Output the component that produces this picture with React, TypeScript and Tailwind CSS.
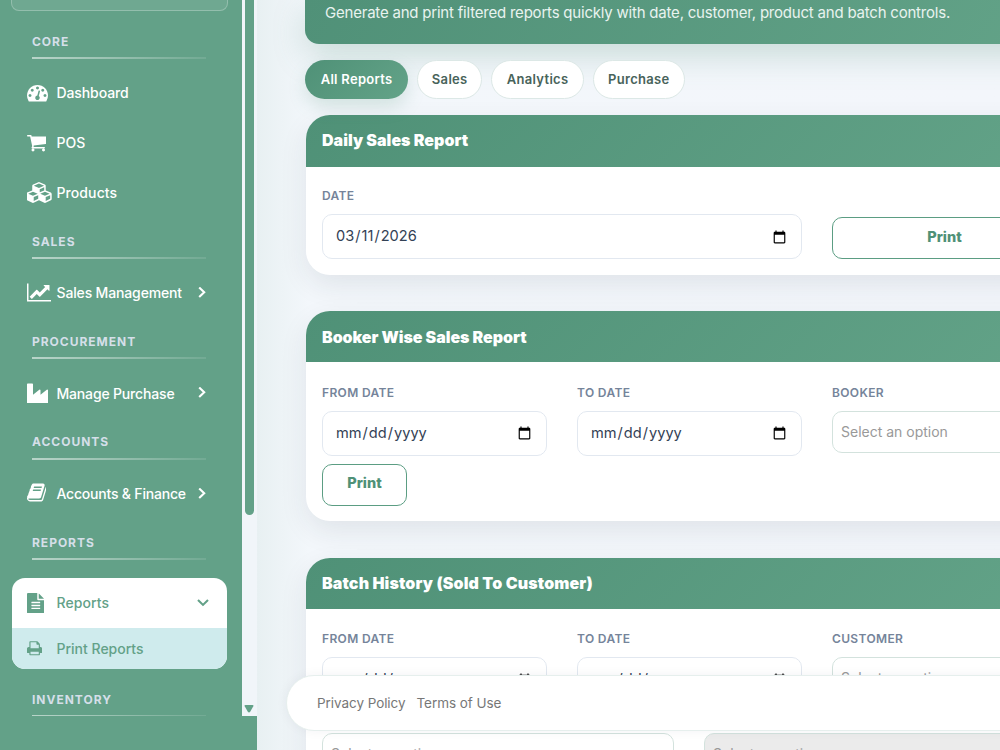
import type { ReactNode } from "react";

type IconProps = { box: string; d: string; className: string; flip?: boolean };

function Icon({ box, d, className, flip }: IconProps) {
  return (
    <svg viewBox={box} className={className} fill="currentColor" aria-hidden="true">
      <path d={d} transform={flip ? "translate(0 1536) scale(1 -1)" : undefined} />
    </svg>
  );
}

const paths = {
  dashboard:
    "M384 1152q0-53-37.5-90.5t-90.5-37.5-90.5 37.5-37.5 90.5 37.5 90.5 90.5 37.5 90.5-37.5 37.5-90.5zm192-448q0-53-37.5-90.5t-90.5-37.5-90.5 37.5-37.5 90.5 37.5 90.5 90.5 37.5 90.5-37.5 37.5-90.5zm428 481l101-382q6-26-7.5-48.5t-38.5-29.5-48 6.5-30 39.5l-101 382q-60 5-107 43.5t-63 98.5q-20 77 20 146t117 89 146-20 89-117q16-60-6-117t-72-91zm660-33q0-53-37.5-90.5t-90.5-37.5-90.5 37.5-37.5 90.5 37.5 90.5 90.5 37.5 90.5-37.5 37.5-90.5zm-640-640q0-53-37.5-90.5t-90.5-37.5-90.5 37.5-37.5 90.5 37.5 90.5 90.5 37.5 90.5-37.5 37.5-90.5zm448 192q0-53-37.5-90.5t-90.5-37.5-90.5 37.5-37.5 90.5 37.5 90.5 90.5 37.5 90.5-37.5 37.5-90.5zm320 448q0 261-141 483-19 29-54 29h-1402q-35 0-54-29-141-221-141-483 0-182 71-348t191-286 286-191 348-71 348 71 286 191 191 286 71 348z",
  cart: "M704 1536q0 52-38 90t-90 38-90-38-38-90 38-90 90-38 90 38 38 90zm896 0q0 52-38 90t-90 38-90-38-38-90 38-90 90-38 90 38 38 90zm128-1088v512q0 24-16.5 42.5t-40.5 21.5l-1044 122q13 60 13 70 0 16-24 64h920q26 0 45 19t19 45-19 45-45 19h-1024q-26 0-45-19t-19-45q0-11 8-31.5t16-36 21.5-40 15.5-29.5l-177-823h-204q-26 0-45-19t-19-45 19-45 45-19h256q16 0 28.5 6.5t19.5 15.5 13 24.5 8 26 5.5 29.5 4.5 26h1201q26 0 45 19t19 45z",
  cubes:
    "M640 1632l384-192v-314l-384 164v342zm-64-454l404-173-404-173-404 173zm1088 454l384-192v-314l-384 164v342zm-64-454l404-173-404-173-404 173zm-448-293l384-165v-266l-384 164v267zm-64-379l441-189-441-189-441 189zm1088 518v416q0 36-19 67t-52 47l-448 224q-25 14-57 14t-57-14l-448-224q-4-2-7-4-2 2-7 4l-448 224q-25 14-57 14t-57-14l-448-224q-33-16-52-47t-19-67v-416q0-38 21.5-70t56.5-48l434-186v-400q0-38 21.5-70t56.5-48l448-192q23-10 50-10t50 10l448 192q35 16 56.5 48t21.5 70v400l434 186q36 16 57 48t21 70z",
  chart:
    "M2048 1536v128h-2048v-1536h128v1408h1920zm-128-1248v435q0 21-19.5 29.5t-35.5-7.5l-121-121-633 633q-10 10-23 10t-23-10l-233-233-416 416-192-192 585-585q10-10 23-10t23 10l233 233 464-464-121-121q-16-16-7.5-35.5t29.5-19.5h435q14 0 23 9t9 23z",
  industry:
    "M448 1536q26 0 45 -19t19 -45v-891l536 429q17 14 40 14q26 0 45 -19t19 -45v-379l536 429q17 14 40 14q26 0 45 -19t19 -45v-1152q0 -26 -19 -45t-45 -19h-1664q-26 0 -45 19t-19 45v1664q0 26 19 45t45 19h384z",
  book: "M1703 478q40 57 18 129l-275 906q-19 64-76.5 107.5t-122.5 43.5h-923q-77 0-148.5-53.5t-99.5-131.5q-24-67-2-127 0-4 3-27t4-37q1-8-3-21.5t-3-19.5q2-11 8-21t16.5-23.5 16.5-23.5q23-38 45-91.5t30-91.5q3-10 .5-30t-.5-28q3-11 17-28t17-23q21-36 42-92t25-90q1-9-2.5-32t.5-28q4-13 22-30.5t22-22.5q19-26 42.5-84.5t27.5-96.5q1-8-3-25.5t-2-26.5q2-8 9-18t18-23 17-21q8-12 16.5-30.5t15-35 16-36 19.5-32 26.5-23.5 36-11.5 47.5 5.5l-1 3q38-9 51-9h761q74 0 114 56t18 130l-274 906q-36 119-71.5 153.5t-128.5 34.5h-869q-27 0-38 15-11 16-1 43 24 70 144 70h923q29 0 56-15.5t35-41.5l300-987q7-22 5-57 38 15 59 43zm-1064 2q-4 13 2 22.5t20 9.5h608q13 0 25.5-9.5t16.5-22.5l21-64q4-13-2-22.5t-20-9.5h-608q-13 0-25.5 9.5t-16.5 22.5zm-83 256q-4 13 2 22.5t20 9.5h608q13 0 25.5-9.5t16.5-22.5l21-64q4-13-2-22.5t-20-9.5h-608q-13 0-25.5 9.5t-16.5 22.5z",
  file: "M1596 476q14 14 28 36h-472v-472q22 14 36 28zm-476 164h544v1056q0 40-28 68t-68 28h-1344q-40 0-68-28t-28-68v-1600q0-40 28-68t68-28h800v544q0 40 28 68t68 28zm160 736v-64q0-14-9-23t-23-9h-704q-14 0-23 9t-9 23v64q0 14 9 23t23 9h704q14 0 23-9t9-23zm0-256v-64q0-14-9-23t-23-9h-704q-14 0-23 9t-9 23v64q0 14 9 23t23 9h704q14 0 23-9t9-23zm0-256v-64q0-14-9-23t-23-9h-704q-14 0-23 9t-9 23v64q0 14 9 23t23 9h704q14 0 23-9t9-23z",
  print:
    "M448 1536h896v-256h-896v256zm0-640h896v-384h-160q-40 0-68-28t-28-68v-160h-640v640zm1280 64v416q0 13-9.500 22.500t-22.500 9.500h-224v160q0 40-28 68t-68 28h-960q-40 0-68-28t-28-68v-160h-224q-13 0-22.500-9.500t-9.500-22.500v-416q0-79 56.500-135.500t135.500-56.500h64v-544q0-40 28-68t68-28h672q40 0 88 20t76 48l152 152q28 28 48 76t20 88v256h64q79 0 135.500 56.500t56.500 135.500z",
};

function Chevron({ down = false }: { down?: boolean }) {
  return (
    <svg viewBox="0 0 12 12" className="size-3" fill="none" stroke="currentColor" strokeWidth="2.1">
      <path d={down ? "M1 3.1 6 7.9 11 3.1" : "M3.2 0.5 8.2 5.3 3.2 10.1"} />
    </svg>
  );
}

function Section({ children }: { children: ReactNode }) {
  return (
    <div className="h-[50.25px] shrink-0 pl-8 pr-9 pt-4">
      <div className="h-[23.4px] text-[12px] font-bold leading-4 tracking-[0.98px] text-[#d5dfe9]">{children}</div>
      <div className="h-[2px] bg-linear-to-r from-white/55 to-white/10" />
    </div>
  );
}

function NavItem({ icon, label, more, className = "" }: { icon: ReactNode; label: string; more?: boolean; className?: string }) {
  return (
    <div className="flex h-[50px] shrink-0 items-center pl-[26.6px] pr-[34px] text-white">
      <span className="flex w-[29.9px] shrink-0 pb-[1.5px]">{icon}</span>
      <span className={`flex-1 whitespace-nowrap text-[14px] font-medium ${className}`}>{label}</span>
      {more && <Chevron />}
    </div>
  );
}

function Sidebar() {
  return (
    <aside className="h-[750px] w-[257px] shrink-0 bg-[#63a188]">
      <div className="flex h-[716px]">
        <nav className="flex w-[242px] flex-col overflow-hidden">
          <div className="ml-[11px] mr-[14px] mb-[6.6px] h-[11px] shrink-0 rounded-b-lg border border-t-0 border-white/25 bg-white/8" />
          <Section>CORE</Section>
          <NavItem label="Dashboard" className="tracking-[-0.1px]" icon={<Icon box="0 0 1792 1792" d={paths.dashboard} className="h-[21px] w-[21px]" />} />
          <NavItem label="POS" icon={<Icon box="64 0 1664 1792" d={paths.cart} className="h-[21px] w-[19.5px]" />} />
          <NavItem label="Products" className="tracking-[0.1px]" icon={<Icon box="64 0 2240 1792" d={paths.cubes} className="h-[21px] w-[26.2px]" />} />
          <Section>SALES</Section>
          <NavItem more label="Sales Management" className="pb-px tracking-[-0.15px]" icon={<Icon box="0 0 2048 1792" d={paths.chart} className="h-[21px] w-[24px]" />} />
          <Section>PROCUREMENT</Section>
          <NavItem more label="Manage Purchase" className="tracking-[-0.17px]" icon={<Icon flip box="0 -128 1792 1792" d={paths.industry} className="h-[21px] w-[21px]" />} />
          <Section>ACCOUNTS</Section>
          <NavItem more label="Accounts & Finance" className="pb-px tracking-[-0.2px]" icon={<Icon box="64 0 1664 1792" d={paths.book} className="h-[21px] w-[19.5px]" />} />
          <Section>REPORTS</Section>
          <div className="mb-[7px] ml-3 mt-[9px] h-[91px] w-[215px] shrink-0 overflow-hidden rounded-[13px] bg-white text-[14px] font-medium text-[#63a188]">
            <div className="flex h-[50px] items-center pl-[14.6px] pr-[18px]">
              <span className="flex w-[29.9px]">
                <Icon box="128 0 1536 1792" d={paths.file} className="h-[20.5px] w-[17.6px]" />
              </span>
              <span className="flex-1 tracking-[0.1px]">Reports</span>
              <Chevron down />
            </div>
            <div className="flex h-[41px] items-center bg-[#cfebed] pl-[14.6px]">
              <span className="flex w-[29.9px] pb-px">
                <Icon box="64 0 1664 1792" d={paths.print} className="h-[16.5px] w-[15.3px]" />
              </span>
              <span>Print Reports</span>
            </div>
          </div>
          <Section>INVENTORY</Section>
        </nav>
        <div className="flex w-[15px] flex-col items-center bg-[#f1f5f9]">
          <div className="mr-px h-[515px] w-[9px] rounded-b-full bg-[#63a188]" />
          <svg viewBox="0 0 10 8" className="mr-px mt-[190px] h-2 w-[10px]" fill="#63a188">
            <path d="M1.5 0h7q1.500 0 .8 1.300L6.200 6.700q-1.200 1.600-2.400 0L.7 1.300Q0 0 1.500 0z" />
          </svg>
        </div>
      </div>
    </aside>
  );
}

type CardProps = { title: string; className?: string; titleClass: string; children: ReactNode };

function Card({ title, className = "", titleClass, children }: CardProps) {
  return (
    <section className={`ml-px w-[767px] overflow-hidden rounded-[24px] bg-white shadow-[0_10px_28px_rgba(30,41,59,0.09)] ${className}`}>
      <h2 className={`flex items-center bg-linear-135 from-[#4f9177] to-[#63a388] px-4 text-[16px] font-black text-white ${titleClass}`}>
        {title}
      </h2>
      {children}
    </section>
  );
}

function Label({ children }: { children: ReactNode }) {
  return <div className="mb-[9px] text-[12px] font-semibold leading-[18px] tracking-[0.35px] text-[#75849a]">{children}</div>;
}

function DateField({ label, value }: { label: string; value?: string }) {
  return (
    <div>
      <Label>{label}</Label>
      <input
        type="date"
        aria-label={label}
        defaultValue={value}
        className="block h-[45px] w-full rounded-[10px] border border-[#e2e8f0] bg-white pl-3 pr-3 pt-px text-[14.6px] text-[#334155]"
      />
    </div>
  );
}

function Select({ className = "" }: { className?: string }) {
  return (
    <div className={`flex h-[42px] items-center rounded-[10px] border border-[#d3e2dd] pb-px pl-2 text-[14px] text-[#999] ${className}`}>
      Select an option
    </div>
  );
}

function PrintButton({ className = "" }: { className?: string }) {
  return (
    <button className={`h-[42px] rounded-[10px] border border-[#5b9d83] bg-white pb-[3px] text-[14.5px] font-extrabold text-[#4f9177] ${className}`}>
      Print
    </button>
  );
}

function Tab({ children, active = false, className }: { children: ReactNode; active?: boolean; className: string }) {
  return (
    <button
      className={`h-[39px] shrink-0 rounded-full text-[13px] font-semibold ${
        active
          ? "bg-linear-135 from-[#4f9177] to-[#63a388] text-white shadow-[0_8px_18px_rgba(79,145,119,0.2)]"
          : "border border-[#dce8e6] bg-white text-[#48635a]"
      } ${className}`}
    >
      {children}
    </button>
  );
}

export default function App() {
  return (
    <div className="relative flex h-[750px] w-[1000px] overflow-hidden bg-[#f1f6fa] font-['Inter',sans-serif]">
      <Sidebar />
      <main className="h-[750px] min-w-0 flex-1 overflow-hidden bg-linear-to-r from-[#e8f0f2] via-[#f3f7fb] via-7% to-[#f3f6fb] pl-12">
        <div className="h-11 w-[769px] rounded-b-[14px] bg-linear-120 from-[#509178] to-[#63a388] pl-5 pt-[3px] text-[15px] leading-5 tracking-[-0.21px] text-[#e8f3ef] shadow-[0_12px_32px_rgba(79,145,119,0.25)]">
          Generate and print filtered reports quickly with date, customer, product and batch controls.
        </div>
        <div className="mt-4 flex gap-[9.2px]">
          <Tab active className="w-[103px] tracking-[0.28px]">All Reports</Tab>
          <Tab className="w-[65px] tracking-[0.3px]">Sales</Tab>
          <Tab className="w-[92.500px] tracking-[0.3px]">Analytics</Tab>
          <Tab className="w-[91.500px] tracking-[0.3px]">Purchase</Tab>
        </div>

        <Card title="Daily Sales Report" titleClass="h-[51.5px] pb-[2px] tracking-[0.03px]" className="mt-4 h-[160px]">
          <div className="grid grid-cols-[480px_225px] items-end gap-[30px] px-4 pt-[20.5px]">
            <DateField label="DATE" value="2026-03-11" />
            <PrintButton />
          </div>
        </Card>

        <Card title="Booker Wise Sales Report" titleClass="h-[51px] tracking-[-0.05px]" className="mt-9 h-[210px]">
          <div className="grid grid-cols-[225px_225px_225px] gap-x-[30px] px-4 pt-[21.5px]">
            <DateField label="FROM DATE" />
            <DateField label="TO DATE" />
            <div>
              <Label>BOOKER</Label>
              <Select />
            </div>
          </div>
          <PrintButton className="ml-4 mt-2 w-[85px]" />
        </Card>

        <Card title="Batch History (Sold To Customer)" titleClass="h-[51px] pb-[2px] tracking-[0.13px]" className="mt-[37px] h-[260px]">
          <div className="grid grid-cols-[225px_225px_225px] gap-x-[30px] px-4 pt-[21px]">
            <DateField label="FROM DATE" />
            <DateField label="TO DATE" />
            <div>
              <Label>CUSTOMER</Label>
              <Select />
            </div>
          </div>
          <div className="mt-[31px] grid grid-cols-[352px_353px] gap-x-[30px] px-4">
            <Select />
            <Select className="bg-[#ebebeb]" />
          </div>
        </Card>
      </main>

      <footer className="absolute left-[286px] top-[675px] flex h-[56px] w-[790px] items-center gap-[11px] rounded-full border border-[#e6efed] bg-white pl-[30px] pt-px text-[13.5px] tracking-[-0.06px] text-[#777] shadow-[0_0_12px_rgba(30,41,59,0.05)]">
        <span>Privacy Policy</span>
        <span>Terms of Use</span>
      </footer>
    </div>
  );
}
